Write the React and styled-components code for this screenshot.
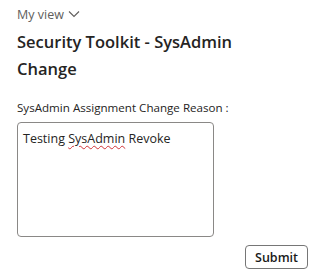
import React from 'react'
import styled, { createGlobalStyle } from 'styled-components'

const Global = createGlobalStyle`
  body {
    margin: 0;
    background: #fff;
    font-family: 'Open Sans', 'Noto Sans', sans-serif;
  }
`

const Page = styled.div`
  display: flex;
  flex-direction: column;
  padding: 5px 16px 0 17px;
  width: 324px;
  box-sizing: border-box;
`

const ViewPicker = styled.button`
  display: flex;
  align-items: center;
  gap: 4px;
  padding: 0;
  border: none;
  background: none;
  font-family: 'Open Sans', sans-serif;
  font-size: 12.5px;
  color: #605e5c;
  height: 18px;
  cursor: pointer;
`

const Title = styled.h1`
  margin: 5px 0 0;
  font-family: 'Open Sans', sans-serif;
  font-size: 16.5px;
  font-weight: 600;
  line-height: 27px;
  color: #252423;
  width: 260px;
`

const Label = styled.label`
  margin-top: 18px;
  font-family: 'Open Sans', sans-serif;
  font-size: 11.6px;
  color: #252423;
`

const TextBox = styled.div`
  margin-top: 7px;
  width: 197px;
  height: 115px;
  box-sizing: border-box;
  border: 1px solid #8a8886;
  border-radius: 4px;
  padding: 7px 5px;
  font-family: 'Open Sans', sans-serif;
  font-size: 12.5px;
  line-height: 17px;
  color: #252423;
  outline: none;
`

const Misspelled = styled.span`
  text-decoration: underline wavy #d13438;
  text-decoration-thickness: 1px;
  text-underline-offset: 2px;
`

const Actions = styled.div`
  display: flex;
  justify-content: flex-end;
  margin-top: 8px;
`

const SubmitButton = styled.button`
  height: 24px;
  padding: 0 9px;
  border: 1px solid #767676;
  border-radius: 4px;
  background: #fff;
  font-family: 'Open Sans', sans-serif;
  font-size: 12.5px;
  font-weight: 600;
  color: #1a1a1a;
`

const App = () => {
  return (
    <>
      <Global />
      <Page>
        <ViewPicker>
          My view
          <svg width="12" height="8" viewBox="0 0 12 8" fill="none">
            <path d="M1 1.5 6 6.5 11 1.5" stroke="#605e5c" strokeWidth="1.1" />
          </svg>
        </ViewPicker>
        <Title>Security Toolkit - SysAdmin Change</Title>
        <Label>SysAdmin Assignment Change Reason :</Label>
        <TextBox contentEditable suppressContentEditableWarning spellCheck={false}>
          Testing <Misspelled>SysAdmin</Misspelled> Revoke
        </TextBox>
        <Actions>
          <SubmitButton type="submit">Submit</SubmitButton>
        </Actions>
      </Page>
    </>
  )
}

export default App
